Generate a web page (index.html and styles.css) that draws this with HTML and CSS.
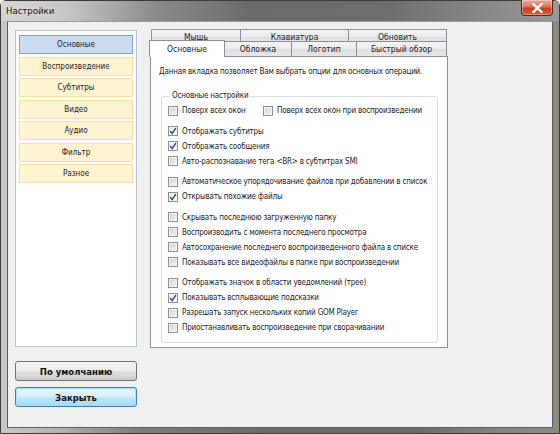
FILE: index.html
```html
<!DOCTYPE html>
<html lang="ru">
<head>
<meta charset="utf-8">
<title>Настройки</title>
<link rel="stylesheet" href="styles.css">
</head>
<body>
<div class="window">
  <div class="titlebar">
    <span class="title">Настройки</span>
    <div class="close">
      <svg width="11" height="10" viewBox="0 0 11 10"><path d="M1.5 1 L9.5 9 M9.5 1 L1.5 9" stroke="#fff" stroke-width="2.4" stroke-linecap="square"/></svg>
    </div>
  </div>
  <div class="client">
    <div class="leftcol">
      <div class="navbox">
        <div class="nav nav-active">Основные</div>
        <div class="nav">Воспроизведение</div>
        <div class="nav">Субтитры</div>
        <div class="nav">Видео</div>
        <div class="nav">Аудио</div>
        <div class="nav">Фильтр</div>
        <div class="nav">Разное</div>
      </div>
      <button class="btn btn-default">По умолчанию</button>
      <button class="btn btn-close">Закрыть</button>
    </div>
    <div class="rightcol">
      <div class="tabrow tabrow-back">
        <div class="tab t-mouse">Мышь</div>
        <div class="tab t-keys">Клавиатура</div>
        <div class="tab t-upd">Обновить</div>
      </div>
      <div class="tabrow tabrow-front">
        <div class="tab tab-sel t-main">Основные</div>
        <div class="tab t-skin">Обложка</div>
        <div class="tab t-logo">Логотип</div>
        <div class="tab t-quick">Быстрый обзор</div>
      </div>
      <div class="panel">
        <p class="desc">Данная вкладка позволяет Вам выбрать опции для основных операций.</p>
        <fieldset class="group">
          <legend>Основные настройки</legend>
          <div class="sect">
            <div class="row">
              <label class="cb cb-first"><span class="box"></span>Поверх всех окон</label>
              <label class="cb"><span class="box"></span>Поверх всех окон при воспроизведении</label>
            </div>
          </div>
          <div class="sect">
            <label class="cb"><span class="box on"><svg width="10" height="10" viewBox="0 0 10 10"><path d="M2.2 5 L4.2 7.6 L7.8 2.2" fill="none" stroke="#2c3f8f" stroke-width="1.4"/></svg></span>Отображать субтитры</label>
            <label class="cb"><span class="box on"><svg width="10" height="10" viewBox="0 0 10 10"><path d="M2.2 5 L4.2 7.6 L7.8 2.2" fill="none" stroke="#2c3f8f" stroke-width="1.4"/></svg></span>Отображать сообщения</label>
            <label class="cb"><span class="box"></span>Авто-распознавание тега &lt;BR&gt; в субтитрах SMI</label>
          </div>
          <div class="sect">
            <label class="cb"><span class="box"></span>Автоматическое упорядочивание файлов при добавлении в список</label>
            <label class="cb"><span class="box on"><svg width="10" height="10" viewBox="0 0 10 10"><path d="M2.2 5 L4.2 7.6 L7.8 2.2" fill="none" stroke="#2c3f8f" stroke-width="1.4"/></svg></span>Открывать похожие файлы</label>
          </div>
          <div class="sect">
            <label class="cb"><span class="box"></span>Скрывать последнюю загруженную папку</label>
            <label class="cb"><span class="box"></span>Воспроизводить с момента последнего просмотра</label>
            <label class="cb"><span class="box"></span>Автосохранение последнего воспроизведенного файла в списке</label>
            <label class="cb"><span class="box"></span>Показывать все видеофайлы в папке при воспроизведении</label>
          </div>
          <div class="sect">
            <label class="cb"><span class="box"></span>Отображать значок в области уведомлений (трее)</label>
            <label class="cb"><span class="box on"><svg width="10" height="10" viewBox="0 0 10 10"><path d="M2.2 5 L4.2 7.6 L7.8 2.2" fill="none" stroke="#2c3f8f" stroke-width="1.4"/></svg></span>Показывать всплывающие подсказки</label>
            <label class="cb"><span class="box"></span>Разрешать запуск нескольких копий GOM Player</label>
            <label class="cb"><span class="box"></span>Приостанавливать воспроизведение при сворачивании</label>
          </div>
        </fieldset>
      </div>
    </div>
  </div>
</div>
</body>
</html>
```

FILE: styles.css
```css
* { box-sizing: border-box; }
html, body { margin: 0; padding: 0; }
body {
  width: 560px;
  height: 434px;
  overflow: hidden;
  background: #ffffff;
  font-family: "DejaVu Sans Condensed", "Liberation Sans", sans-serif;
  font-size: 8px;
  color: #1c1c1c;
}
.window {
  width: 560px;
  height: 434px;
  display: flex;
  flex-direction: column;
  border: 1px solid #3b3b3b;
  border-radius: 6px 6px 0 0;
  background: linear-gradient(90deg, #c8c8c8 0%, #b4b4b4 10%, #7c7c7c 25%, #6a6a6a 50%, #6c6c6c 75%, #858585 90%, #8e8a82 100%);
}
.titlebar {
  height: 20px;
  display: flex;
  justify-content: space-between;
  align-items: flex-start;
  padding: 0 6px 0 5px;
  background: linear-gradient(90deg, #d4d4d4 0%, #c6c6c6 12%, #8a8a8a 28%, #6a6a6a 45%, #6e6e6e 70%, #8a8a8a 88%, #9a9a9a 100%);
}
.title {
  font-size: 9.5px;
  line-height: 20px;
  color: #111;
  text-shadow: 0 0 6px rgba(255,255,255,0.9);
}
.close {
  width: 32px;
  height: 16px;
  margin-top: -1px;
  border: 1px solid #4a2a22;
  border-top: none;
  border-radius: 0 0 4px 4px;
  background: linear-gradient(180deg, #e9a796 0%, #d8765e 45%, #c43d22 55%, #d2603c 100%);
  display: flex;
  align-items: center;
  justify-content: center;
  box-shadow: inset 0 0 0 1px rgba(255,255,255,0.35);
}
.client {
  flex: 1;
  margin: 0 6px 5px 6px;
  background: #f0f0f0;
  border: 1px solid #5e5e5e;
  border-top-color: #9a9a9a;
  padding: 8px 7px 0 7px;
  display: flex;
  gap: 13px;
}
.leftcol {
  width: 122px;
  display: flex;
  flex-direction: column;
}
.navbox {
  height: 317px;
  background: #fff;
  border: 1px solid #b4c2d2;
  padding: 4px 3px;
  display: flex;
  flex-direction: column;
  gap: 2.5px;
}
.nav {
  height: 19px;
  display: flex;
  align-items: center;
  justify-content: center;
  background: #fff3d2;
  border: 1px solid #f7deaa;
  color: #222;
}
.nav-active {
  background: #cbdcf2;
  border-color: #7f9fd3;
}
.btn {
  height: 20px;
  width: 122px;
  font-family: "DejaVu Sans Condensed", "Liberation Sans", sans-serif;
  font-weight: bold;
  font-size: 9.5px;
  color: #111;
  border-radius: 3px;
  padding: 0;
}
.btn-default {
  margin-top: 14px;
  border: 1px solid #707070;
  background: linear-gradient(180deg, #f4f4f4 0%, #ebebeb 48%, #dddddd 52%, #d0d0d0 100%);
}
.btn-close {
  margin-top: 6px;
  border: 1px solid #3c7fb1;
  background: linear-gradient(180deg, #eaf6fd 0%, #d9f0fc 48%, #bee6fd 52%, #a7d9f5 100%);
  box-shadow: inset 0 0 0 1px #a6e0fb;
}
.rightcol {
  width: 298px;
  margin-top: -1px;
  display: flex;
  flex-direction: column;
}
.tabrow {
  display: flex;
  height: 14px;
  align-items: flex-end;
}
.tabrow-back { padding-left: 1px; }
.tabrow-front { margin-top: -1px; }
.tab {
  height: 14px;
  display: flex;
  align-items: center;
  justify-content: center;
  border: 1px solid #8c8f98;
  border-bottom: none;
  background: linear-gradient(180deg, #f4f4f4 0%, #ebebeb 50%, #dedede 51%, #e6e6e6 100%);
  color: #222;
  margin-right: -1px;
  font-size: 8.5px;
}
.tabrow-front .tab { height: 15px; }
.t-mouse { width: 90px; }
.t-keys { width: 109px; }
.t-upd { width: 99px; }
.tab-sel {
  position: relative;
  z-index: 2;
  height: 17px !important;
  margin-bottom: -1px;
  background: #fff;
  padding-bottom: 1px;
}
.t-main { width: 76px; margin-left: -1px; }
.t-skin { width: 68px; }
.t-logo { width: 66px; }
.t-quick { width: 91px; }
.panel {
  height: 292px;
  background: #fff;
  border: 1px solid #8c8f98;
  padding: 9px 9px 0 8px;
  letter-spacing: -0.2px;
}
.desc {
  margin: 0;
  line-height: 11px;
}
.group {
  margin: 14px 0 0 2px;
  width: 277px;
  height: 252px;
  border: 1px solid #d5dfe5;
  border-radius: 3px;
  padding: 2px 0 0 6px;
}
.group legend {
  padding: 0 2px;
  margin-left: 2px;
  line-height: 10px;
}
.sect {
  display: flex;
  flex-direction: column;
  margin-bottom: 5.5px;
}
.row { display: flex; }
.cb {
  height: 15px;
  display: flex;
  align-items: center;
  white-space: nowrap;
  color: #1c1c1c;
}
.cb-first { width: 95px; }
.box {
  width: 10px;
  height: 10px;
  margin-right: 4px;
  border: 1px solid #8e8f8f;
  background: linear-gradient(135deg, #d2d2d2 0%, #e6e6e6 60%, #f2f2f2 100%);
  box-shadow: inset 0 0 0 1px #f4f4f4;
  flex: none;
  display: flex;
  align-items: center;
  justify-content: center;
}
.box.on {
  background: linear-gradient(135deg, #e6e6e6 0%, #f6f6f6 60%, #ffffff 100%);
}
.box svg { display: block; margin: -1px; }
```
